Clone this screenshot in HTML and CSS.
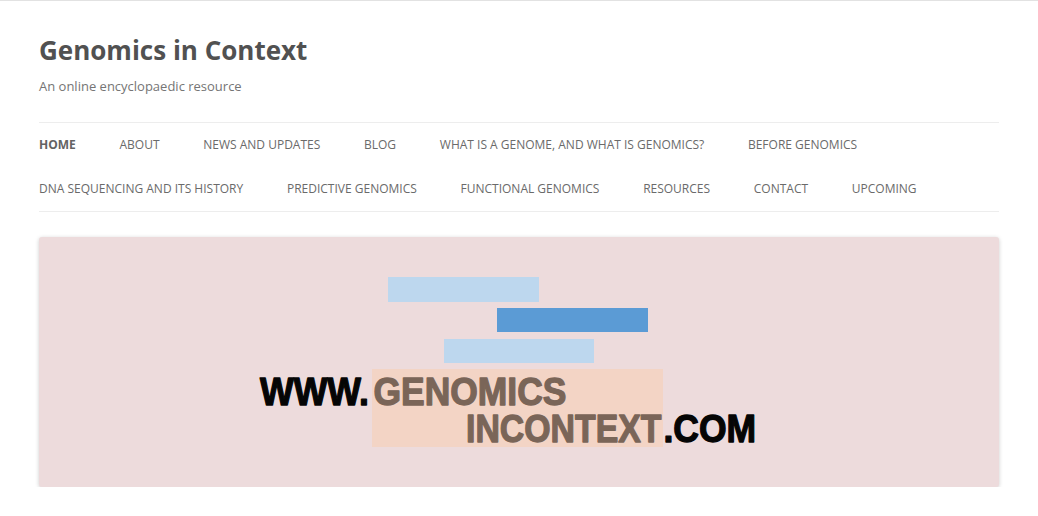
FILE: index.html
```html
<!DOCTYPE html>
<html lang="en">
<head>
<meta charset="utf-8">
<title>Genomics in Context</title>
<link rel="stylesheet" href="styles.css">
</head>
<body>
<div class="site">
  <header class="site-header">
    <h1 class="site-title">Genomics in Context</h1>
    <h2 class="site-description">An online encyclopaedic resource</h2>
    <nav class="main-navigation">
      <ul class="nav-menu">
        <li class="current"><a href="#">Home</a></li>
        <li><a href="#">About</a></li>
        <li><a href="#">News and Updates</a></li>
        <li><a href="#">Blog</a></li>
        <li><a href="#">What is a genome, and what is genomics?</a></li>
        <li><a href="#">Before Genomics</a></li>
        <li><a href="#">DNA Sequencing and its History</a></li>
        <li><a href="#">Predictive Genomics</a></li>
        <li><a href="#">Functional Genomics</a></li>
        <li><a href="#">Resources</a></li>
        <li><a href="#">Contact</a></li>
        <li><a href="#">Upcoming</a></li>
      </ul>
    </nav>
    <div class="header-image">
      <svg class="banner" width="960" height="250" viewBox="0 0 960 250" xmlns="http://www.w3.org/2000/svg">
        <rect x="349" y="40" width="151" height="25" fill="#bdd7ee"/>
        <rect x="458" y="71" width="151" height="24" fill="#5b9bd5"/>
        <rect x="405" y="102" width="150" height="24" fill="#bdd7ee"/>
        <rect x="333" y="132" width="291" height="78" fill="#f3d4c5"/>
        <g class="banner-text">
          <text class="dark" transform="translate(221 168) scale(0.915 1)">WWW.</text>
          <text class="brown" transform="translate(334.5 168) scale(0.909 1)">GENOMICS</text>
          <text class="brown" transform="translate(427 205) scale(0.868 1)">INCONTEXT</text>
          <text class="dark" transform="translate(624.5 205) scale(0.91 1)">.COM</text>
        </g>
      </svg>
    </div>
  </header>
</div>
</body>
</html>
```

FILE: styles.css
```css
html, body {
  margin: 0;
  padding: 0;
}

body {
  background: #fff;
  border-top: 1px solid #e2e2e2;
  font-family: "Open Sans", "Liberation Sans", sans-serif;
  color: #444;
}

.site {
  width: 960px;
  margin: 0 auto;
}

.site-header {
  padding-top: 25px;
}

.site-title {
  margin: 0;
  font-size: 26px;
  line-height: 48px;
  font-weight: bold;
  color: #515151;
}

.site-description {
  margin: 0;
  font-size: 13px;
  line-height: 24px;
  font-weight: normal;
  color: #757575;
}

.main-navigation {
  margin-top: 24px;
}

.nav-menu {
  margin: 0;
  padding: 0;
  list-style: none;
  border-top: 1px solid #ededed;
  border-bottom: 1px solid #ededed;
  font-size: 12px;
}

.nav-menu li {
  display: inline-block;
  margin: 0 40.6px 0 0;
}

.nav-menu a {
  display: inline-block;
  line-height: 44px;
  color: #6a6a6a;
  text-decoration: none;
  text-transform: uppercase;
  white-space: nowrap;
}

.nav-menu .current a {
  color: #636363;
  font-weight: bold;
}

.header-image {
  margin-top: 25px;
  width: 960px;
  height: 250px;
  border-radius: 3px;
  overflow: hidden;
  background: #eddbdc;
  box-shadow: 0 1px 4px rgba(0, 0, 0, 0.2);
}

.banner {
  display: block;
}

.banner-text {
  font-family: "Liberation Sans", Arial, sans-serif;
  font-weight: bold;
  font-size: 39px;
  stroke-width: 1.3px;
  stroke-linejoin: round;
}

.banner-text .dark {
  fill: #050505;
  stroke: #050505;
}

.banner-text .brown {
  fill: #7a6558;
  stroke: #7a6558;
}
```
